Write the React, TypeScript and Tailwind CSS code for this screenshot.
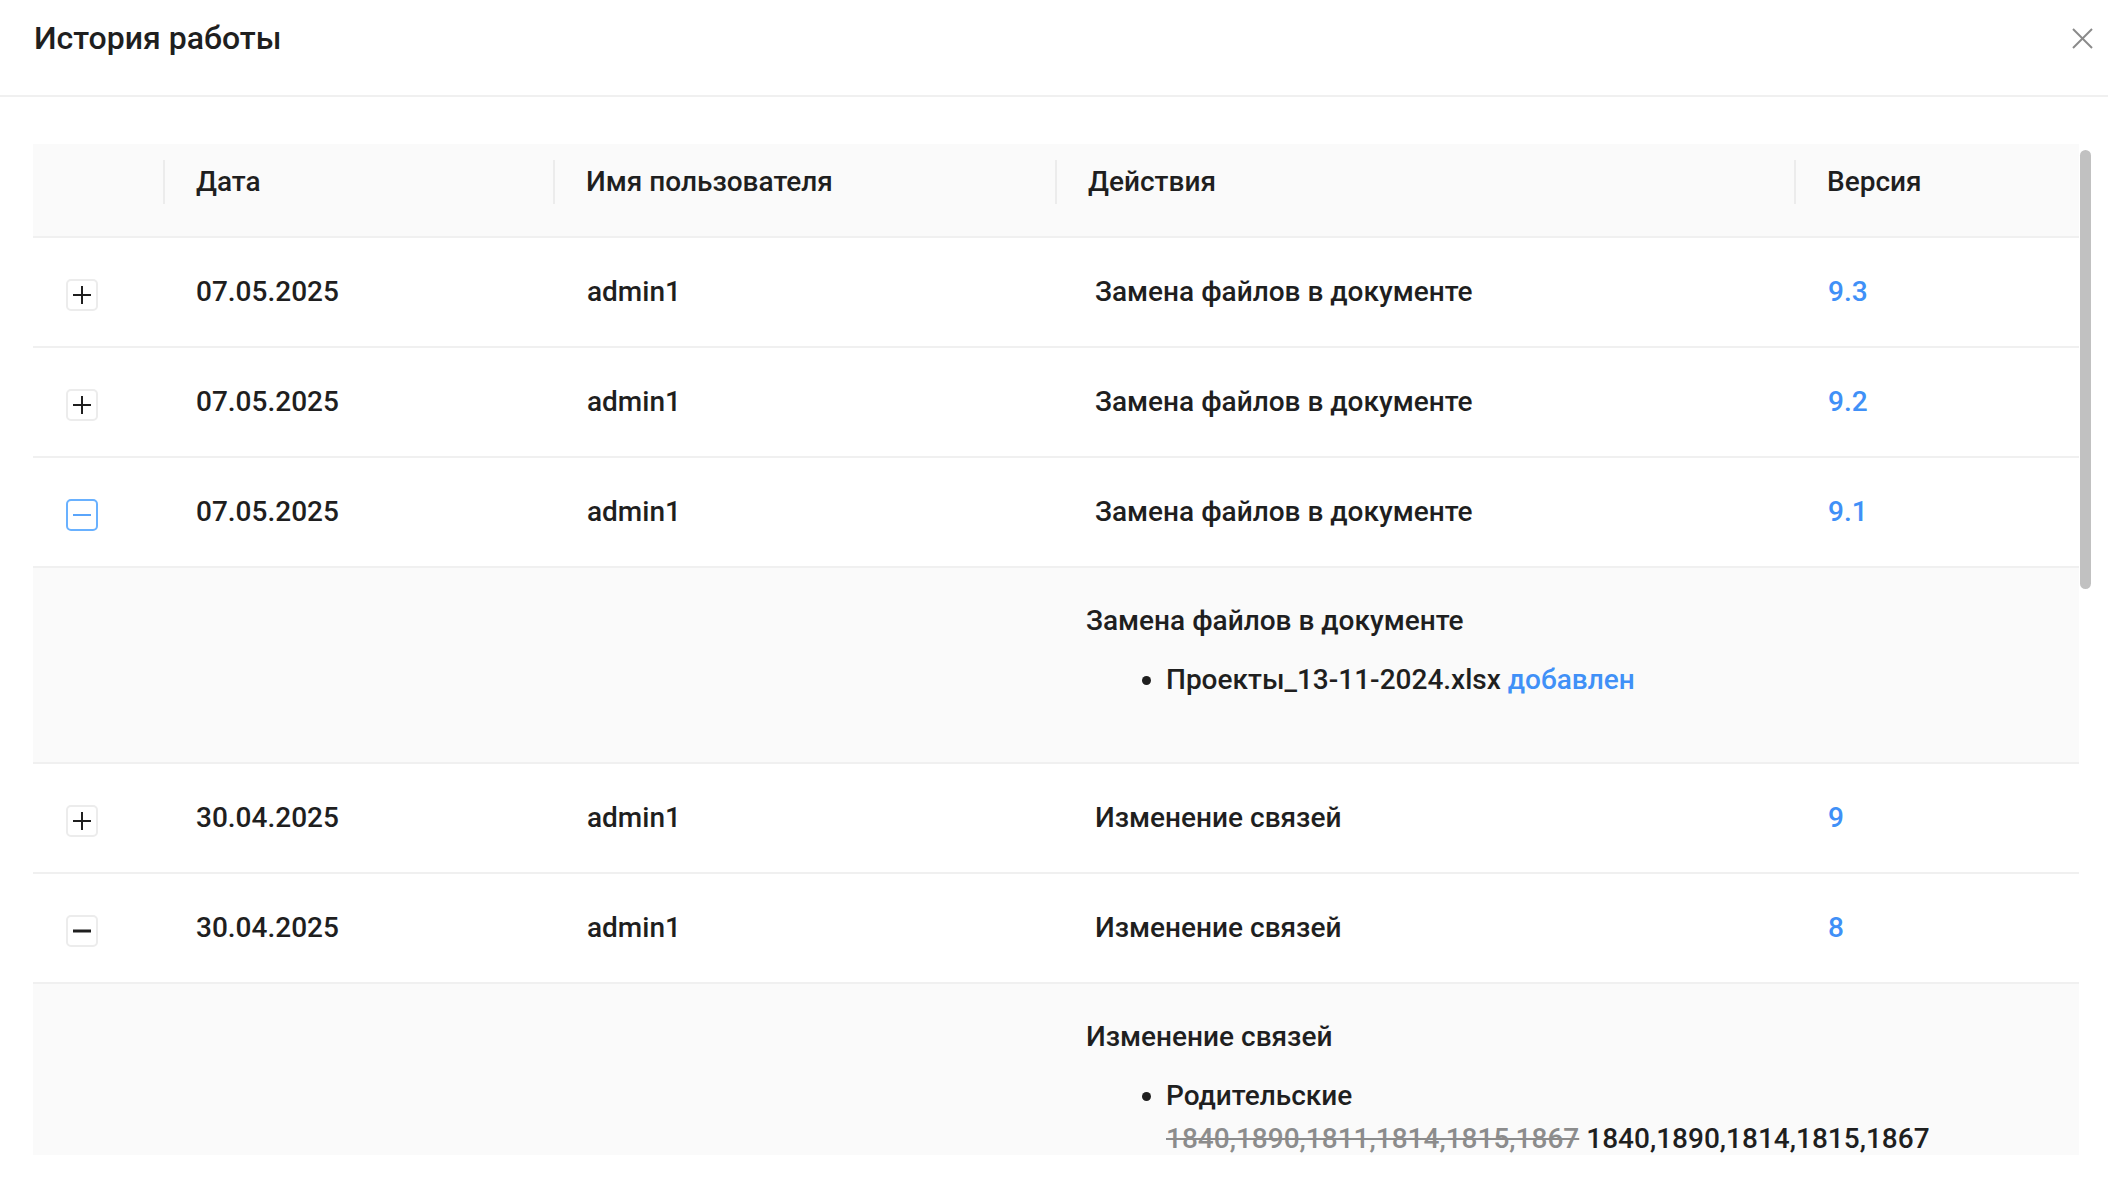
import React from "react";

const cols = "grid grid-cols-[130px_390px_502px_739px_285px]";

function ExpandBtn({ kind }: { kind: "plus" | "minus" | "minusActive" | "minusBold" }) {
  const active = kind === "minusActive";
  const color = active ? "#5aa5fb" : "#1f1f1f";
  const sw = kind === "minusBold" ? 3 : 2;
  return (
    <button
      className={
        "mt-[6px] w-[32px] h-[32px] rounded-[5px] border-2 bg-white flex items-center justify-center " +
        (active ? "border-[#69b1ff]" : "border-[#ececec]")
      }
    >
      <svg width="18" height="18" viewBox="0 0 18 18">
        <line x1="0" y1="9" x2="18" y2="9" stroke={color} strokeWidth={sw} />
        {kind === "plus" && <line x1="9" y1="0" x2="9" y2="18" stroke={color} strokeWidth={sw} />}
      </svg>
    </button>
  );
}

function Row({ date, action, version, btn }: { date: string; action: string; version: string; btn: "plus" | "minus" | "minusActive" | "minusBold" }) {
  return (
    <div className={cols + " h-[110px] border-b-2 border-[#f0f0f0] items-center bg-white"}>
      <div className="pl-[33px] flex items-center">
        <ExpandBtn kind={btn} />
      </div>
      <div className="pl-[33px]">{date}</div>
      <div className="pl-[34px]">admin1</div>
      <div className="pl-[40px]">{action}</div>
      <div className="pl-[34px] text-[#4090f7]">{version}</div>
    </div>
  );
}

function HeadCell({ label, divider }: { label?: string; divider: boolean }) {
  return (
    <div className="flex items-center">
      {divider && <span className="w-[2px] h-[44px] bg-[#ececec]" />}
      {label && <span className="ml-[31px]">{label}</span>}
    </div>
  );
}

export default function App() {
  return (
    <div className="w-[2108px] h-[1180px] bg-white overflow-hidden font-['Roboto','Liberation_Sans',sans-serif] text-[#1f1f1f] font-medium text-[28px] leading-[44px]">
      <div className="h-[97px] border-b-2 border-[#f0f0f0] flex items-start justify-between pl-[34px] pr-[15px] pt-[14px]">
        <h1 className="text-[32px] leading-[48px] font-medium">История работы</h1>
        <svg className="mt-[14px]" width="21" height="21" viewBox="0 0 21 21">
          <line x1="1" y1="1" x2="20" y2="20" stroke="#8a8a8a" strokeWidth="2" />
          <line x1="20" y1="1" x2="1" y2="20" stroke="#8a8a8a" strokeWidth="2" />
        </svg>
      </div>
      <div className="flex pl-[33px] pt-[47px]">
        <div className="w-[2046px] h-[1011px] overflow-hidden">
          <div className={cols + " bg-[#fafafa] border-b-2 border-[#f0f0f0] pt-[16px] pb-[32px]"}>
            <HeadCell divider={false} />
            <HeadCell divider label="Дата" />
            <HeadCell divider label="Имя пользователя" />
            <HeadCell divider label="Действия" />
            <HeadCell divider label="Версия" />
          </div>
          <Row date="07.05.2025" action="Замена файлов в документе" version="9.3" btn="plus" />
          <Row date="07.05.2025" action="Замена файлов в документе" version="9.2" btn="plus" />
          <Row date="07.05.2025" action="Замена файлов в документе" version="9.1" btn="minusActive" />
          <div className={cols + " bg-[#fafafa] border-b-2 border-[#f0f0f0] h-[196px]"}>
            <div className="col-start-4 col-span-2 pl-[31px] pt-[31px]">
              <div>Замена файлов в документе</div>
              <ul className="mt-[15px] pl-[80px] list-disc">
                <li>
                  Проекты_13-11-2024.xlsx <span className="text-[#4090f7]">добавлен</span>
                </li>
              </ul>
            </div>
          </div>
          <Row date="30.04.2025" action="Изменение связей" version="9" btn="plus" />
          <Row date="30.04.2025" action="Изменение связей" version="8" btn="minusBold" />
          <div className={cols + " bg-[#fafafa] h-[300px]"}>
            <div className="col-start-4 col-span-2 pl-[31px] pt-[31px]">
              <div>Изменение связей</div>
              <ul className="mt-[15px] pl-[80px] list-disc">
                <li>
                  <div>Родительские</div>
                  <div className="-mt-[1px]">
                    <s className="text-[#8c8c8c] decoration-[#8c8c8c]">1840,1890,1811,1814,1815,1867</s>{" "}
                    1840,1890,1814,1815,1867
                  </div>
                </li>
              </ul>
            </div>
          </div>
        </div>
        <div className="w-[13px] pl-[1px] pt-[6px]">
          <div className="w-[11px] h-[439px] rounded-full bg-[#c1c1c1]" />
        </div>
      </div>
    </div>
  );
}
